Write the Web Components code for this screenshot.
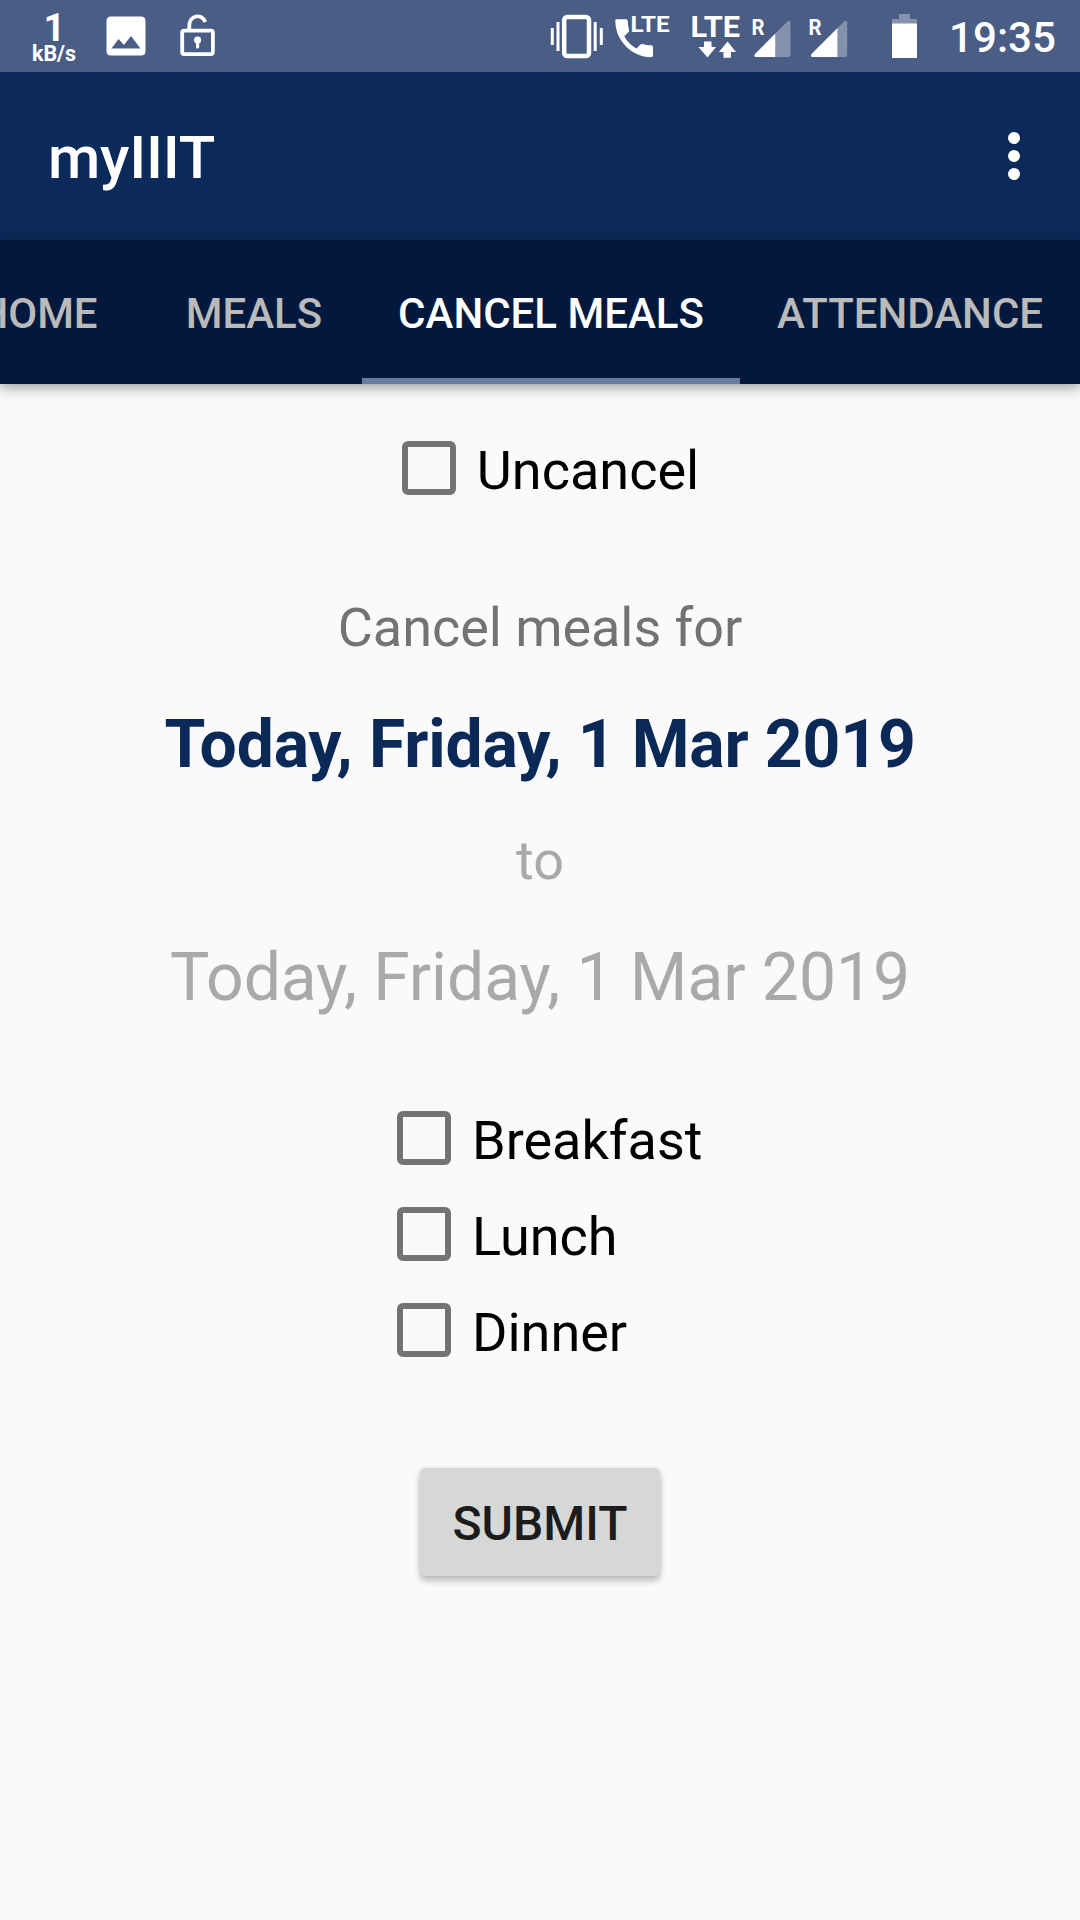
<!DOCTYPE html>
<html lang="en">
<head>
<meta charset="utf-8">
<title>myIIIT</title>
<style>
html,body{margin:0;padding:0;background:#fafafa}
body{width:1080px;height:1920px;overflow:hidden;font-family:Roboto,sans-serif}
</style>
</head>
<body>
<my-app></my-app>
<script>
const define = (name, html) => {
  const t = document.createElement('template');
  t.innerHTML = html;
  customElements.define(name, class extends HTMLElement {
    constructor() {
      super();
      this.attachShadow({mode: 'open'}).append(t.content.cloneNode(true));
    }
  });
};

define('status-bar', `
<style>
:host{display:block;height:72px;background:#4a5d85}
svg{display:block;font-family:Roboto,sans-serif;fill:#fff}
</style>
<svg width="1080" height="72" viewBox="0 0 1080 72">
  <text x="43.5" y="41" font-size="38" font-weight="700">1</text>
  <text x="32" y="61" font-size="22" font-weight="700" textLength="44" lengthAdjust="spacingAndGlyphs">kB/s</text>
  <path fill-rule="evenodd" d="M111 16.5H141Q145.500 16.500 145.500 21V51Q145.500 55.500 141 55.500H111Q106.500 55.500 106.500 51V21Q106.500 16.500 111 16.500ZM111.500 48.500H140.500L131 36L124 45L118.500 39Z"/>
  <rect x="182.200" y="30.600" width="30.700" height="23.500" rx="2" fill="none" stroke="#fff" stroke-width="3.800"/>
  <path d="M189.300 30V26C189.300 15 201.500 13 205.300 22" fill="none" stroke="#fff" stroke-width="3.800"/>
  <circle cx="197.600" cy="40" r="3.600"/><rect x="196" y="41" width="3.200" height="7.500" rx="1.500"/>
  <rect x="564.200" y="17" width="24.800" height="39" rx="3" fill="none" stroke="#fff" stroke-width="4.500"/>
  <path d="M552.300 28V45M558 22V51M595.200 22V51M601.300 28V45" fill="none" stroke="#fff" stroke-width="3"/>
  <path d="M616 19.300H626Q627.500 19.300 627.700 21Q628 26 629 30Q629.300 31 628.500 32L624.300 36.300C627.500 42 631 45.500 636.500 48.500L640.500 44.500Q641.500 43.700 642.500 44Q646.500 45.200 651.500 45.300Q653 45.500 653 47V55.500Q653 57.200 651 57.200C632 57.200 615.300 40.500 615.300 21Q615.300 19.300 616 19.300Z"/>
  <text x="630.500" y="32" font-size="22.500" font-weight="700" textLength="39" lengthAdjust="spacingAndGlyphs">LTE</text>
  <text x="690.500" y="37" font-size="29.500" font-weight="700" textLength="49.500" lengthAdjust="spacingAndGlyphs">LTE</text>
  <path d="M704 41.500H711.500V47H716L707.500 57.500L698.500 47H704ZM723.500 57.800V52H719L727.500 41.500L736 52H731V57.800Z"/>
  <text x="751.500" y="35" font-size="22" font-weight="700" textLength="13" lengthAdjust="spacingAndGlyphs">R</text>
  <path opacity=".32" d="M775.300 33.500L787.500 21.500Q790.500 19.500 790.500 23V54.500Q790.500 57 788 57H775.300Z"/>
  <path d="M775.300 33.500V57H756Q753.500 57 755 54Z"/>
  <text x="808.500" y="35" font-size="22" font-weight="700" textLength="13" lengthAdjust="spacingAndGlyphs">R</text>
  <path opacity=".32" d="M837.500 28L844.200 21.500Q847.200 19.500 847.200 23V54.500Q847.200 57 844.700 57H837.500Z"/>
  <path d="M837.500 28V57H812.500Q810 57 811.500 54Z"/>
  <path opacity=".32" d="M899 14H910V19H917V24H892V19H899Z"/>
  <rect x="892" y="23.500" width="25" height="34.500"/>
  <text x="949" y="52" font-size="42.500" font-weight="500" textLength="107" lengthAdjust="spacingAndGlyphs">19:35</text>
</svg>`);

define('tool-bar', `
<style>
:host{display:flex;align-items:center;justify-content:space-between;height:168px;box-sizing:border-box;padding:0 60px 0 48px;background:#0c2a59;color:#fff}
h1{margin:4px 0 0;font:500 60px/72px Roboto,sans-serif;letter-spacing:-.2px}
svg{display:block}
</style>
<h1><slot></slot></h1>
<svg width="12" height="48" viewBox="0 0 12 48" fill="#fff"><circle cx="6" cy="6" r="6"/><circle cx="6" cy="24" r="6"/><circle cx="6" cy="42" r="6"/></svg>`);

define('tab-item', `
<style>
:host{display:flex;flex:none;box-sizing:border-box;width:var(--tab-width,216px);height:144px;padding-top:10px;align-items:center;justify-content:center;white-space:nowrap;font-size:42px;font-weight:500;line-height:50px;color:#bababa;border-bottom:6px solid transparent}
:host([selected]){color:#fff;border-color:#687b9f}
</style><slot></slot>`);

define('tab-strip', `
<style>
:host{display:flex;justify-content:flex-end;height:144px;background:#02193d;box-shadow:0 4px 12px rgba(0,0,0,.36)}
</style><slot></slot>`);

define('check-box', `
<style>
:host{display:flex;align-items:center;height:96px;font-size:54px;line-height:64px;color:#000}
i{flex:none;width:42px;height:42px;margin:0 21px;border:6px solid #737373;border-radius:6px}
span{padding-top:5px}
</style><i></i><span><slot></slot></span>`);

define('raised-button', `
<style>
:host{display:block}
button{display:flex;align-items:center;justify-content:center;width:240px;height:108px;border:0;border-radius:6px;padding:4px 0 0;background:#d6d8d7;color:#1c1c1c;font:500 48px/56px Roboto,sans-serif;box-shadow:0 5px 7px rgba(0,0,0,.24),0 0 4px rgba(0,0,0,.1)}
</style><button><slot></slot></button>`);

define('cancel-form', `
<style>
:host{display:flex;flex-direction:column;align-items:center;padding-top:36px}
p{margin:0;white-space:nowrap}
.label{margin-top:80px;font-size:54px;line-height:64px;color:#737373;letter-spacing:-.06px}
.from{margin-top:46px;font-size:66px;line-height:78px;font-weight:700;color:#0b2956;letter-spacing:-.16px}
.to{margin-top:45px;font-size:54px;line-height:64px;color:#a9a9a9}
.until{margin-top:46px;font-size:66px;line-height:78px;color:#a9a9a9;letter-spacing:-.06px}
.meals{display:flex;flex-direction:column;width:328px;margin-top:73px}
raised-button{margin-top:90px}
</style>
<check-box>Uncancel</check-box>
<p class="label">Cancel meals for</p>
<p class="from">Today, Friday, 1 Mar 2019</p>
<p class="to">to</p>
<p class="until">Today, Friday, 1 Mar 2019</p>
<div class="meals"><check-box>Breakfast</check-box><check-box>Lunch</check-box><check-box>Dinner</check-box></div>
<raised-button>SUBMIT</raised-button>`);

define('my-app', `
<style>
:host{display:flex;flex-direction:column;width:1080px;height:1920px;overflow:hidden;background:#fafafa}
.cancel{--tab-width:378px}
.attendance{--tab-width:340px}
</style>
<status-bar></status-bar>
<tool-bar>myIIIT</tool-bar>
<tab-strip><tab-item>HOME</tab-item><tab-item>MEALS</tab-item><tab-item class="cancel" selected>CANCEL MEALS</tab-item><tab-item class="attendance">ATTENDANCE</tab-item></tab-strip>
<cancel-form></cancel-form>`);
</script>
</body>
</html>
